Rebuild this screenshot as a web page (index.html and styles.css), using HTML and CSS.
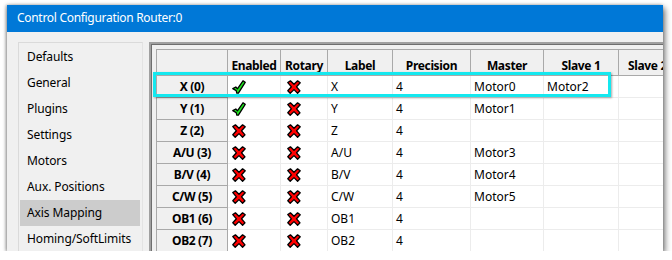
FILE: index.html
```html
<!DOCTYPE html>
<html lang="en">
<head>
    <meta charset="UTF-8">
    <title>Control Configuration Router:0</title>
    <link rel="stylesheet" href="styles.css">
</head>
<body>

    <div class="window">
        <div class="titlebar">Control Configuration Router:0</div>

        <div class="content">
            <!-- Left: page list -->
            <ul class="nav">
                <li>Defaults</li>
                <li>General</li>
                <li>Plugins</li>
                <li>Settings</li>
                <li>Motors</li>
                <li>Aux. Positions</li>
                <li class="selected">Axis Mapping</li>
                <li>Homing/SoftLimits</li>
            </ul>

            <!-- Right: axis grid -->
            <div class="panel">
                <table class="grid">
                    <colgroup>
                        <col class="c-axis">
                        <col class="c-enabled">
                        <col class="c-rotary">
                        <col class="c-label">
                        <col class="c-precision">
                        <col class="c-master">
                        <col class="c-slave">
                        <col class="c-slave">
                    </colgroup>
                    <thead>
                        <tr>
                            <th class="corner"></th>
                            <th>Enabled</th>
                            <th>Rotary</th>
                            <th>Label</th>
                            <th>Precision</th>
                            <th>Master</th>
                            <th>Slave 1</th>
                            <th class="last">Slave 2</th>
                        </tr>
                    </thead>
                    <tbody id="rows"></tbody>
                </table>
            </div>
        </div>

        <!-- annotation around the X row -->
        <div class="highlight"></div>
    </div>

    <script>
        var CHECK = '<svg class="icon" viewBox="0 0 14 14"><path d="M0.8 8.6 L3.8 7 L5.4 8.8 L11 0.8 L13.2 2.4 L6.4 13.2 L4.8 13.2 L4.2 10.6 Z" fill="#1ee61e" stroke="#000" stroke-width="1.3" stroke-linejoin="round"/></svg>';
        var CROSS = '<svg class="icon" viewBox="0 0 14 14"><path d="M0.8 2.6 L3.4 0.8 L7 4.2 L10.6 0.8 L13.2 2.8 L9.6 6.8 L13 10.8 L10.6 13.2 L7 9.6 L3.2 13.2 L0.8 10.8 L4.4 6.8 Z" fill="#f00" stroke="#000" stroke-width="1.3" stroke-linejoin="round"/></svg>';

        // axis, enabled, rotary, label, master, slave 1
        var axes = [
            ['X (0)', true, false, 'X', 'Motor0', 'Motor2'],
            ['Y (1)', true, false, 'Y', 'Motor1', ''],
            ['Z (2)', false, false, 'Z', '', ''],
            ['A/U (3)', false, false, 'A/U', 'Motor3', ''],
            ['B/V (4)', false, false, 'B/V', 'Motor4', ''],
            ['C/W (5)', false, false, 'C/W', 'Motor5', ''],
            ['OB1 (6)', false, false, 'OB1', '', ''],
            ['OB2 (7)', false, false, 'OB2', '', '']
        ];

        var html = '';
        for (var i = 0; i < axes.length; i++) {
            var a = axes[i];
            html += '<tr>' +
                '<th>' + a[0] + '</th>' +
                '<td class="ico">' + (a[1] ? CHECK : CROSS) + '</td>' +
                '<td class="ico rot">' + (a[2] ? CHECK : CROSS) + '</td>' +
                '<td>' + a[3] + '</td>' +
                '<td>4</td>' +
                '<td>' + a[4] + '</td>' +
                '<td>' + a[5] + '</td>' +
                '<td></td>' +
                '</tr>';
        }
        document.getElementById('rows').innerHTML = html;
    </script>

</body>
</html>
```

FILE: styles.css
```css
body {
    font-family: "Noto Sans", "Open Sans", sans-serif;
    font-size: 12px;
    margin: 0;
    padding: 5px 0 0 7px;
    background: #ffffff;
    overflow: hidden;
    color: #000;
}
.window {
    position: relative;
    width: 656px;
    height: 246px;
    background: #f0f0f0;
    box-shadow: 2px 3px 6px rgba(0, 0, 0, 0.55), -1px 0 3px rgba(0, 0, 0, 0.35);
    overflow: hidden;
}
.titlebar {
    height: 27px;
    line-height: 25px;
    padding-left: 10px;
    background: #0078d7;
    color: #ffffff;
    letter-spacing: -0.3px;
}
.content {
    display: flex;
    padding: 10px 0 0 11px;
    gap: 6px;
}
.nav {
    flex-shrink: 0;
    list-style: none;
    margin: 0;
    padding: 1px 2px 0 1px;
    width: 120px;
    height: 220px;
    border: 1px solid #dadada;
    border-right-color: #e3e3e3;
    background: #f0f0f0;
    letter-spacing: -0.1px;
}
.nav li {
    height: 26px;
    line-height: 26px;
    padding-left: 7px;
    white-space: nowrap;
}
.nav li.selected {
    background: #cccccc;
}
.panel {
    flex-shrink: 0;
    width: 520px;
    height: 220px;
    padding: 5px 0 0 5px;
    border-top: 2px solid #a0a0a0;
    border-left: 2px solid #a0a0a0;
    box-shadow: inset 1px 1px 0 #6e6e6e;
}
.grid {
    border-collapse: collapse;
    table-layout: fixed;
    width: 537px;
    border-top: 1px solid #7a7a7a;
    border-left: 1px solid #7a7a7a;
    background: #ffffff;
}
.c-axis { width: 71px; }
.c-enabled { width: 53px; }
.c-rotary { width: 47px; }
.c-label { width: 65px; }
.c-precision { width: 78px; }
.c-master { width: 73px; }
.c-slave { width: 75px; }

.grid thead tr {
    height: 26px;
}
.grid tbody tr {
    height: 22px;
}
.grid th {
    background: #f0f0f0;
    font-weight: bold;
    text-align: center;
    padding: 0;
    border: 1px solid #a9a9a9;
    white-space: nowrap;
    overflow: hidden;
    letter-spacing: -0.35px;
}
.grid thead th {
    padding-top: 5px;
}
.grid thead th.last {
    text-align: left;
    padding-left: 9px;
}
.grid td {
    padding: 0 0 0 3px;
    border: 1px solid #ececec;
    white-space: nowrap;
    overflow: hidden;
}
.grid td.ico {
    padding-left: 4px;
}
.grid td.rot {
    padding-left: 6px;
}
.icon {
    display: block;
    width: 14px;
    height: 14px;
}
.highlight {
    position: absolute;
    left: 146px;
    top: 67px;
    width: 452px;
    height: 19px;
    border: 3px solid #14e8ef;
    box-shadow: 1px 1px 2px rgba(0, 0, 0, 0.35);
}
```
